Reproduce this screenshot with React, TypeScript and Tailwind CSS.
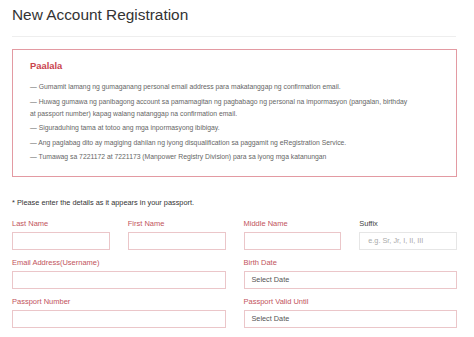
import React from 'react';

const notes: React.ReactNode[] = [
  "— Gumamit lamang ng gumaganang personal email address para makatanggap ng confirmation email.",
  <>
    — Huwag gumawa ng panibagong account sa pamamagitan ng pagbabago ng personal na impormasyon (pangalan, birthday
    <br />
    at passport number) kapag walang natanggap na confirmation email.
  </>,
  "— Siguraduhing tama at totoo ang mga inpormasyong ibibigay.",
  "— Ang paglabag dito ay magiging dahilan ng iyong disqualification sa paggamit ng eRegistration Service.",
  "— Tumawag sa 7221172 at 7221173 (Manpower Registry Division) para sa iyong mga katanungan",
];

const Field: React.FC<{ label: string; span?: boolean; placeholder?: string; value?: string; plain?: boolean }> = ({
  label,
  span,
  placeholder,
  value,
  plain,
}) => (
  <div className={span ? "col-span-2" : ""}>
    <div className={`text-[7.5px] leading-[12px] mb-[2px] ${plain ? "text-[#444]" : "text-[#c2545d]"}`}>{label}</div>
    <div
      className={`h-[18px] border flex items-center text-[7.3px] ${
        plain ? "border-[#e6e6e6] text-[#aaa] pl-[8px]" : "border-[#ebc6c9] text-[#555] pl-[7px]"
      }`}
    >
      {placeholder || value}
    </div>
  </div>
);

export default function App() {
  return (
    <div className="w-[474px] h-[337px] bg-white overflow-hidden px-[12px] font-['Liberation_Sans',Arial,sans-serif]">
      <h1 className="text-[15.4px] leading-[20px] pt-[5px] text-[#333] font-normal">New Account Registration</h1>
      <div className="h-px bg-[#eeeeee] mt-[11px] mr-[6px]" />

      <div className="mt-[12px] mr-[5px] border border-[#e39aa2] pl-[17px] pr-[12px] pt-[10px] pb-[12px] h-[128px]">
        <h2 className="text-[9.4px] leading-[12px] font-bold text-[#c9444e]">Paalala</h2>
        <div className="mt-[9px] flex flex-col gap-[2.5px] text-[6.8px] leading-[12px] text-[#666]">
          {notes.map((n, i) => (
            <p key={i}>{n}</p>
          ))}
        </div>
      </div>

      <p className="mt-[20px] text-[7.35px] leading-[12px] text-[#333]">* Please enter the details as it appears in your passport.</p>

      <div className="mt-[9px] mr-[5px] grid grid-cols-4 gap-x-[18px] gap-y-[7px]">
        <Field label="Last Name" value="" />
        <Field label="First Name" value="" />
        <Field label="Middle Name" value="" />
        <Field label="Suffix" placeholder="e.g. Sr, Jr, I, II, III" plain />
        <Field label="Email Address(Username)" span value="" />
        <Field label="Birth Date" span value="Select Date" />
        <Field label="Passport Number" span value="" />
        <Field label="Passport Valid Until" span value="Select Date" />
      </div>
    </div>
  );
}
